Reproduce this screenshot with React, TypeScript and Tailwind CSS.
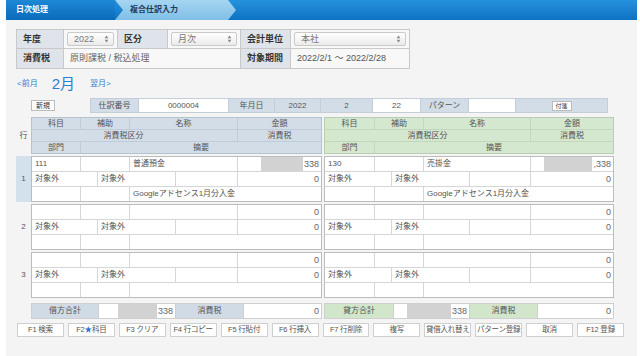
import React from 'react';

const F = "font-['Liberation_Sans','Noto_Sans_CJK_JP',sans-serif]";

type Cell = { text?: string; box?: number; amount?: boolean };

const Arrows = () => (
  <svg width="5" height="8" viewBox="0 0 5 8" className="shrink-0">
    <path d="M2.5 0.6 L4.4 3.2 L0.6 3.2 Z M2.5 7.4 L4.4 4.8 L0.6 4.8 Z" fill="#888" />
  </svg>
);

const SelectBox = ({ value }: { value: string }) => (
  <div className="flex h-full items-center justify-between rounded-[2px] border border-[#cacaca] bg-linear-to-b from-white to-[#ebebeb] pl-[6px] pr-[4px] font-normal text-[#777]">
    <span>{value}</span>
    <Arrows />
  </div>
);

const InfoLabel = ({ children }: { children: React.ReactNode }) => (
  <div className="flex items-center bg-[#dfe4ea] pl-[6px] font-bold text-[#333]">{children}</div>
);

const Breadcrumb = () => (
  <div className="flex h-[20px] shrink-0 bg-linear-to-b from-[#2592dd] to-[#0c73c4] text-[8px] font-bold">
    <div className="flex w-[109px] items-center bg-linear-to-b from-[#1d88d6] to-[#0a6cbb] pl-[10px] text-white">日次処理</div>
    <div className="flex w-[121px] items-center bg-linear-to-b from-[#a6d5f1] to-[#7fbfe7] pl-[15px] text-[#1d3b5a] [clip-path:polygon(0_0,113px_0,121px_50%,113px_100%,0_100%,8px_50%)]">
      複合仕訳入力
    </div>
  </div>
);

const InfoTable = () => (
  <div className="mt-[9px] grid w-[394px] grid-cols-[46px_53px_49px_72px_49px_118px] grid-rows-[18px_19px] gap-px border border-[#c9c9c9] bg-[#c9c9c9] text-[9px]">
    <InfoLabel>年度</InfoLabel>
    <div className="bg-[#f8f8f8] px-[3px] py-[2px]"><SelectBox value="2022" /></div>
    <InfoLabel>区分</InfoLabel>
    <div className="bg-[#f8f8f8] px-[3px] py-[2px]"><SelectBox value="月次" /></div>
    <InfoLabel>会計単位</InfoLabel>
    <div className="bg-[#f8f8f8] px-[3px] py-[2px]"><SelectBox value="本社" /></div>
    <InfoLabel>消費税</InfoLabel>
    <div className="col-span-3 flex items-center bg-[#f8f8f8] pl-[6px] text-[#666]">原則課税 / 税込処理</div>
    <InfoLabel>対象期間</InfoLabel>
    <div className="flex items-center bg-[#f8f8f8] pl-[6px] text-[#555]">2022/2/1 ～ 2022/2/28</div>
  </div>
);

const MonthNav = () => (
  <div className="mt-[6px] flex h-[17px] items-center text-[#2d7dd0]">
    <span className="ml-px text-[8px]">&lt;前月</span>
    <span className="ml-[14px] text-[15px] leading-none">2月</span>
    <span className="ml-[15px] text-[8px]">翌月&gt;</span>
  </div>
);

const JournalHeader = () => {
  const lbl = 'flex items-center justify-center bg-[#d3dde7]';
  const val = 'flex items-center justify-center bg-white';
  return (
    <div className="mt-[6px] flex h-[15px] text-[8px] text-[#555]">
      <div className="flex w-[74px] items-center pl-[15px]">
        <div className="flex h-[11px] w-[24px] items-center justify-center border border-[#bbb] bg-white text-[7px] text-[#333]">新規</div>
      </div>
      <div className="flex gap-px border border-[#c3ced9] bg-[#c3ced9]">
        <div className={`${lbl} w-[47px]`}>仕訳番号</div>
        <div className={`${val} w-[89px]`}>0000004</div>
        <div className={`${lbl} w-[45px]`}>年月日</div>
        <div className={`${lbl} w-[45px]`}>2022</div>
        <div className={`${lbl} w-[51px]`}>2</div>
        <div className={`${val} w-[47px]`}>22</div>
        <div className={`${lbl} w-[47px]`}>パターン</div>
        <div className={`${val} w-[46px]`}></div>
        <div className={`${lbl} w-[91px]`}>
          <div className="flex h-[10px] w-[20px] items-center justify-center border border-[#bbb] bg-white text-[6px] text-[#333]">付箋</div>
        </div>
      </div>
    </div>
  );
};

const debitCols = ['grid-cols-[48px_48px_107px_1fr]', 'grid-cols-[65px_77px_61px_1fr]', 'grid-cols-[48px_48px_1fr]'];
const creditCols = ['grid-cols-[49px_48px_106px_1fr]', 'grid-cols-[66px_77px_60px_1fr]', 'grid-cols-[49px_48px_1fr]'];

const HeaderBlock = ({ credit }: { credit?: boolean }) => {
  const cols = credit ? creditCols : debitCols;
  const bg = credit ? 'bg-[#d4e7cf]' : 'bg-[#d3dde7]';
  const c = `flex items-center justify-center overflow-hidden ${bg}`;
  return (
    <div className={`flex flex-col gap-px border ${credit ? 'ml-[2px] w-[290px] border-[#b9ccb4] bg-[#c3d6be]' : 'w-[291px] border-[#b5c2cf] bg-[#c1ccd8]'}`}>
      <div className={`grid h-[11px] grid-rows-[11px] gap-px ${cols[0]}`}>
        <div className={c}>科目</div>
        <div className={c}>補助</div>
        <div className={c}>名称</div>
        <div className={c}>金額</div>
      </div>
      <div className={`grid h-[11px] grid-rows-[11px] gap-px ${credit ? 'grid-cols-[1fr_82px]' : 'grid-cols-[1fr_83px]'}`}>
        <div className={`${c} ${credit ? '' : 'pr-[22px]'}`}>消費税区分</div>
        <div className={c}>消費税</div>
      </div>
      <div className={`grid h-[11px] grid-rows-[11px] gap-px ${credit ? 'grid-cols-[49px_1fr]' : 'grid-cols-[48px_1fr]'}`}>
        <div className={c}>部門</div>
        <div className={c}>摘要</div>
      </div>
    </div>
  );
};

const EntryBlock = ({ rows, credit }: { rows: Cell[][]; credit?: boolean }) => {
  const cols = credit ? creditCols : debitCols;
  return (
    <div className={`flex flex-col gap-px border border-[#bcbcbc] bg-[#d6d6d6] ${credit ? 'ml-[2px] w-[290px]' : 'w-[291px]'}`}>
      {rows.map((row, i) => (
        <div key={i} className={`grid h-[14px] grid-rows-[14px] gap-px ${cols[i]}`}>
          {row.map((cell, j) =>
            cell.amount ? (
              <div key={j} className="flex h-full items-center justify-end overflow-hidden bg-white pr-[2px] text-[9px] text-[#666]">
                {cell.box ? <span className="mr-px h-full bg-[#d2d2d2]" style={{ width: cell.box }} /> : null}
                <span>{cell.text}</span>
              </div>
            ) : (
              <div key={j} className="flex items-center overflow-hidden whitespace-nowrap bg-white pl-[3px] text-[#555]">
                {cell.text}
              </div>
            )
          )}
        </div>
      ))}
    </div>
  );
};

const blank = (): Cell[][] => [
  [{}, {}, {}, { amount: true, text: '0' }],
  [{ text: '対象外' }, { text: '対象外' }, {}, { amount: true, text: '0' }],
  [{}, {}, {}],
];

const entries: { debit: Cell[][]; credit: Cell[][] }[] = [
  {
    debit: [
      [{ text: '111' }, {}, { text: '普通預金' }, { amount: true, text: '338', box: 42 }],
      [{ text: '対象外' }, { text: '対象外' }, {}, { amount: true, text: '0' }],
      [{}, {}, { text: 'Googleアドセンス1月分入金' }],
    ],
    credit: [
      [{ text: '130' }, {}, { text: '売掛金' }, { amount: true, text: ',338', box: 48 }],
      [{ text: '対象外' }, { text: '対象外' }, {}, { amount: true, text: '0' }],
      [{}, {}, { text: 'Googleアドセンス1月分入金' }],
    ],
  },
  { debit: blank(), credit: blank() },
  { debit: blank(), credit: blank() },
];

const Totals = () => {
  const white = 'flex items-center justify-end bg-white pr-[2px] text-[9px] text-[#666]';
  const blue = 'flex items-center justify-center bg-[#d0dbe6]';
  const green = 'flex items-center justify-center bg-[#d2e6cc]';
  return (
    <div className="mt-[5px] flex h-[16px] pl-[15px] text-[8px] text-[#555]">
      <div className="grid w-[291px] grid-cols-[66px_76px_67px_1fr] gap-px border border-[#cfcfcf] bg-[#cfcfcf]">
        <div className={blue}>借方合計</div>
        <div className={white}><span className="mr-px h-full w-[39px] bg-[#d2d2d2]" />338</div>
        <div className={blue}>消費税</div>
        <div className={white}>0</div>
      </div>
      <div className="ml-[2px] grid w-[290px] grid-cols-[68px_75px_67px_1fr] gap-px border border-[#cfcfcf] bg-[#cfcfcf]">
        <div className={green}>貸方合計</div>
        <div className={white}><span className="mr-px h-full w-[44px] bg-[#d2d2d2]" />338</div>
        <div className={green}>消費税</div>
        <div className={white}>0</div>
      </div>
    </div>
  );
};

const buttons: React.ReactNode[] = [
  'F1 検索',
  <>F2 <span className="text-[#2b6fcf]">★</span>科目</>,
  'F3 クリア',
  'F4 行コピー',
  'F5 行貼付',
  'F6 行挿入',
  'F7 行削除',
  '複写',
  '貸借入れ替え',
  'パターン登録',
  '取消',
  'F12 登録',
];

const Buttons = () => (
  <div className="ml-px mt-[4px] grid h-[14px] w-[607px] grid-cols-12 gap-[4px]">
    {buttons.map((b, i) => (
      <div key={i} className="flex items-center justify-center overflow-hidden whitespace-nowrap border border-[#cfcfcf] bg-white text-[7.5px] tracking-[-0.2px] text-[#555]">
        {b}
      </div>
    ))}
  </div>
);

export default function App() {
  return (
    <div className={`h-[356px] w-[640px] overflow-hidden bg-white pl-[6px] pr-[3px] leading-none ${F}`}>
      <div className="flex h-full flex-col bg-[#f4f4f4]">
        <Breadcrumb />
        <div className="flex flex-col pl-[10px] text-[8px]">
          <InfoTable />
          <MonthNav />
          <JournalHeader />
          <div className="mt-[4px] flex text-[#555]">
            <div className="flex w-[15px] items-center justify-center">行</div>
            <HeaderBlock />
            <HeaderBlock credit />
          </div>
          {entries.map((e, i) => (
            <div key={i} className="mt-[2px] flex">
              <div className={`flex w-[15px] items-center justify-center text-[#555] ${i === 0 ? 'bg-[#d3e1ec]' : ''}`}>{i + 1}</div>
              <EntryBlock rows={e.debit} />
              <EntryBlock rows={e.credit} credit />
            </div>
          ))}
          <Totals />
          <Buttons />
        </div>
      </div>
    </div>
  );
}
